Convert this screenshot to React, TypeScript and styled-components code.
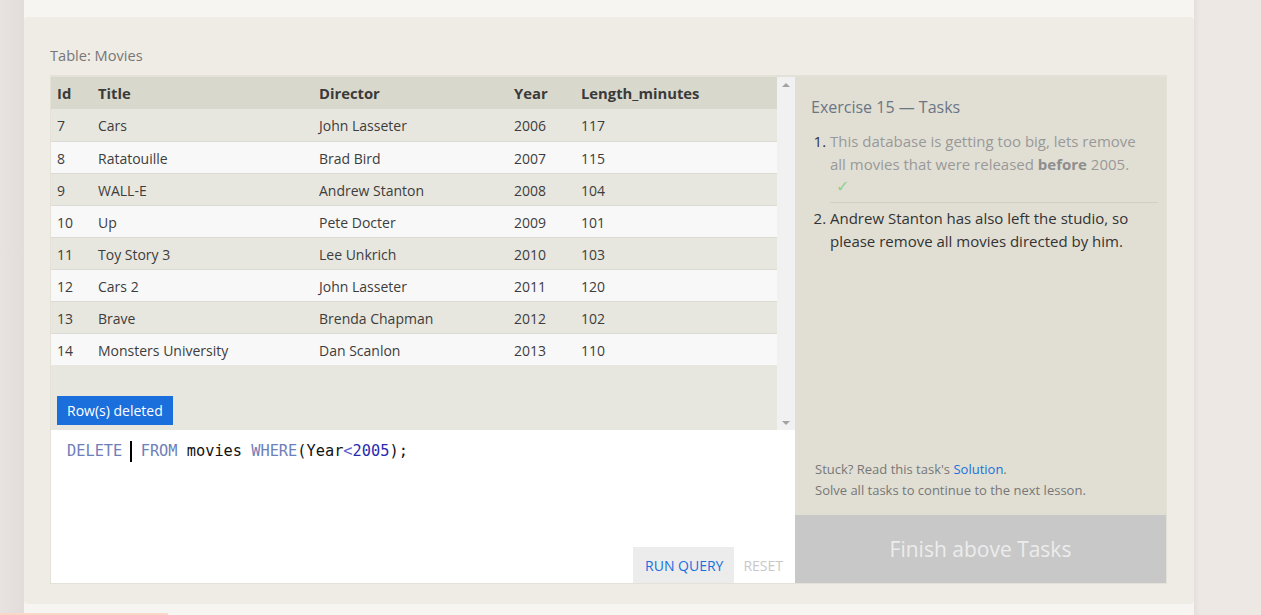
import React from "react";
import styled, { createGlobalStyle } from "styled-components";

const Global = createGlobalStyle`
  html, body { margin: 0; padding: 0; }
  body { font-family: "Open Sans", "Noto Sans", sans-serif; color: #333; overflow: hidden; }
  * { box-sizing: border-box; }
`;

const Page = styled.div`
  display: flex;
  height: 615px;
  width: 1261px;
  background: #ede8e4;
`;

const SideStrip = styled.div`
  width: 24px;
  flex: none;
  background: linear-gradient(to right, #e8e3e0, #e2dddb);
`;

const RightStrip = styled.div`
  flex: 1;
  background: linear-gradient(to right, #e4dfdc, #ede8e4 6px);
`;

const Main = styled.div`
  width: 1170px;
  flex: none;
  background: #f6f5f1;
  padding-top: 17px;
`;

const Card = styled.section`
  background: #efece5;
  border-radius: 4px;
  padding: 22px 27px 20px 26px;
`;

const TableLabel = styled.div`
  font-size: 14.6px;
  color: #777;
  line-height: 32px;
  margin-bottom: 4px;
`;

const Widget = styled.div`
  display: flex;
  height: 509px;
  border: 1px solid #e3e1d8;
`;

const LeftCol = styled.div`
  width: 744px;
  display: flex;
  flex-direction: column;
`;

const ResultArea = styled.div`
  height: 354px;
  display: flex;
  background: #e8e7df;
  border-top: 1px solid #e3e1d8;
`;

const ResultScroll = styled.div`
  flex: 1;
  display: flex;
  flex-direction: column;
`;

const Table = styled.table`
  border-collapse: collapse;
  width: 100%;
  font-size: 14px;
  table-layout: fixed;
`;

const Th = styled.th<{ $w?: number }>`
  text-align: left;
  font-weight: 700;
  font-size: 14.8px;
  color: #3a3a3a;
  background: #d9d8cc;
  height: 32px;
  padding: 0 0 0 6px;
  width: ${(p) => (p.$w ? `${p.$w}px` : "auto")};
`;

const Tr = styled.tr<{ $light: boolean }>`
  background: ${(p) => (p.$light ? "#f8f8f8" : "#e8e7df")};
  border-top: 1px solid #dddcd4;
  &:first-child { border-top: none; }
`;

const Td = styled.td`
  height: 32px;
  padding: 2px 0 0 6px;
  color: #3d3d3d;
`;

const StatusRow = styled.div`
  margin-top: auto;
  padding: 0 0 5px 6px;
`;

const Badge = styled.span`
  display: inline-block;
  background: #1a6fdd;
  color: #fff;
  font-size: 14px;
  padding: 0 10px;
  line-height: 29px;
`;

const Scrollbar = styled.div`
  width: 18px;
  background: #f1f1f1;
  display: flex;
  flex-direction: column;
  justify-content: space-between;
  align-items: center;
  padding: 6px 0 5px;
`;

const Arrow = styled.div<{ $up?: boolean }>`
  width: 0;
  height: 0;
  border-left: 4px solid transparent;
  border-right: 4px solid transparent;
  ${(p) =>
    p.$up
      ? "border-bottom: 4px solid #a3a3a3;"
      : "border-top: 4px solid #a3a3a3;"}
`;

const Editor = styled.div`
  flex: 1;
  background: #fff;
  display: flex;
  flex-direction: column;
`;

const CodeLine = styled.div`
  font-family: "DejaVu Sans Mono", "Liberation Mono", monospace;
  font-size: 15.3px;
  line-height: 21px;
  padding: 11px 0 0 16px;
  white-space: pre;
  color: #111;
`;

const Kw = styled.span`
  color: #6d80b8;
`;

const Num = styled.span`
  color: #2a2ab0;
`;

const Op = styled.span`
  color: #5d62d0;
`;

const Caret = styled.span`
  display: inline-block;
  width: 2px;
  height: 21px;
  background: #000;
  margin: 0 -1px;
  vertical-align: top;
`;

const EditorFooter = styled.div`
  margin-top: auto;
  display: flex;
  justify-content: flex-end;
`;

const QueryButton = styled.button<{ $primary?: boolean }>`
  border: none;
  font-family: inherit;
  font-size: 14px;
  height: 36px;
  padding: 0 ${(p) => (p.$primary ? "11px 0 12px" : "12px 0 9px")};
  background: ${(p) => (p.$primary ? "#ececec" : "transparent")};
  color: ${(p) => (p.$primary ? "#1a6fdd" : "#c8c8c8")};
`;

const Tasks = styled.aside`
  flex: 1;
  background: #e1dfd4;
  display: flex;
  flex-direction: column;
  border-top: 1px solid #e3e1d8;
`;

const TasksBody = styled.div`
  padding: 18px 8px 0 16px;
`;

const TasksTitle = styled.h2`
  margin: 0 0 11px;
  font-size: 16px;
  font-weight: 400;
  color: #6b7585;
  line-height: 24px;
`;

const TaskList = styled.ol`
  margin: 0;
  padding: 0 0 0 19px;
  font-size: 15px;
  line-height: 23px;
`;

const TaskItem = styled.li<{ $done?: boolean }>`
  color: #333;
  padding-right: 12px;
  padding-bottom: ${(p) => (p.$done ? "4px" : "0")};
  margin-bottom: ${(p) => (p.$done ? "4px" : "0")};
  border-bottom: ${(p) => (p.$done ? "1px solid #d1cfc4" : "none")};
`;

const DoneText = styled.span`
  color: #999;
  b { color: #8e8e8e; }
`;

const Check = styled.div`
  color: #8fcf8f;
  padding-left: 6px;
  font-family: "DejaVu Sans", sans-serif;
  font-size: 16px;
  line-height: 22px;
`;

const Help = styled.div`
  margin-top: auto;
  padding: 0 0 14px 20px;
  font-size: 13px;
  line-height: 21px;
  color: #777;
  a { color: #1a6fdd; text-decoration: none; }
`;

const FinishButton = styled.div`
  height: 68px;
  background: #c8c8c8;
  color: #ececec;
  font-size: 21px;
  display: flex;
  align-items: center;
  justify-content: center;
`;

const BottomAccent = styled.div`
  position: fixed;
  left: 0;
  bottom: 0;
  width: 168px;
  height: 2px;
  background: #fbd8c6;
`;

const rows: [number, string, string, number, number][] = [
  [7, "Cars", "John Lasseter", 2006, 117],
  [8, "Ratatouille", "Brad Bird", 2007, 115],
  [9, "WALL-E", "Andrew Stanton", 2008, 104],
  [10, "Up", "Pete Docter", 2009, 101],
  [11, "Toy Story 3", "Lee Unkrich", 2010, 103],
  [12, "Cars 2", "John Lasseter", 2011, 120],
  [13, "Brave", "Brenda Chapman", 2012, 102],
  [14, "Monsters University", "Dan Scanlon", 2013, 110],
];

export default function App() {
  return (
    <>
      <Global />
      <Page>
        <SideStrip />
        <Main>
          <Card>
            <TableLabel>Table: Movies</TableLabel>
            <Widget>
              <LeftCol>
                <ResultArea>
                  <ResultScroll>
                    <Table>
                      <thead>
                        <tr>
                          <Th $w={41}>Id</Th>
                          <Th $w={221}>Title</Th>
                          <Th $w={195}>Director</Th>
                          <Th $w={67}>Year</Th>
                          <Th>Length_minutes</Th>
                        </tr>
                      </thead>
                      <tbody>
                        {rows.map((r, i) => (
                          <Tr key={r[0]} $light={i % 2 === 1}>
                            {r.map((c, j) => (
                              <Td key={j}>{c}</Td>
                            ))}
                          </Tr>
                        ))}
                      </tbody>
                    </Table>
                    <StatusRow>
                      <Badge>Row(s) deleted</Badge>
                    </StatusRow>
                  </ResultScroll>
                  <Scrollbar>
                    <Arrow $up />
                    <Arrow />
                  </Scrollbar>
                </ResultArea>
                <Editor>
                  <CodeLine>
                    <Kw>DELETE</Kw>{" "}<Caret />{" "}<Kw>FROM</Kw>{" movies "}<Kw>WHERE</Kw>{"(Year"}<Op>&lt;</Op><Num>2005</Num>{");"}
                  </CodeLine>
                  <EditorFooter>
                    <QueryButton $primary>RUN QUERY</QueryButton>
                    <QueryButton>RESET</QueryButton>
                  </EditorFooter>
                </Editor>
              </LeftCol>
              <Tasks>
                <TasksBody>
                  <TasksTitle>Exercise 15 — Tasks</TasksTitle>
                  <TaskList>
                    <TaskItem $done>
                      <DoneText>
                        This database is getting too big, lets remove all
                        movies that were released <b>before</b> 2005.
                      </DoneText>
                      <Check>✓</Check>
                    </TaskItem>
                    <TaskItem>
                      Andrew Stanton has also left the studio, so please remove
                      all movies directed by him.
                    </TaskItem>
                  </TaskList>
                </TasksBody>
                <Help>
                  Stuck? Read this task's <a href="#">Solution</a>.
                  <br />
                  Solve all tasks to continue to the next lesson.
                </Help>
                <FinishButton>Finish above Tasks</FinishButton>
              </Tasks>
            </Widget>
          </Card>
        </Main>
        <RightStrip />
      </Page>
      <BottomAccent />
    </>
  );
}
